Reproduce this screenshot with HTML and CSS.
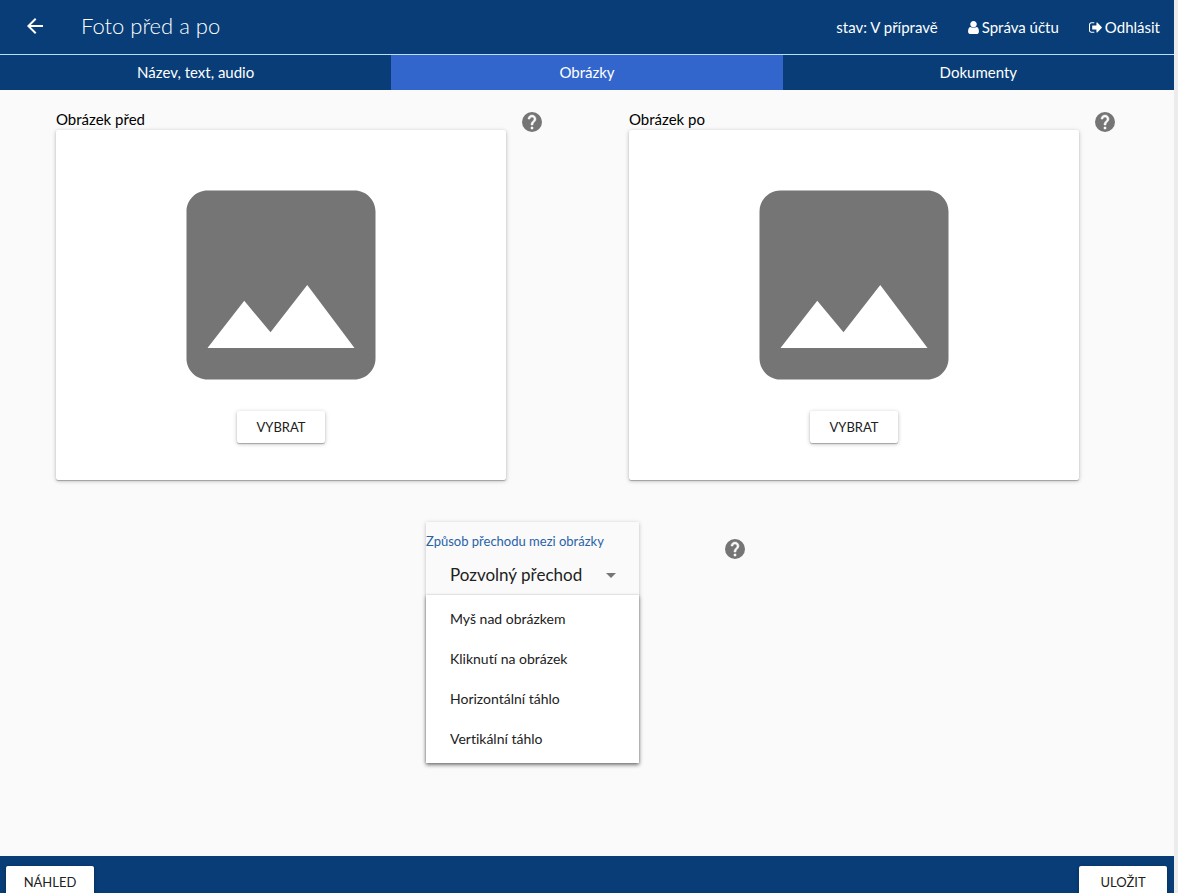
FILE: index.html
```html
<!DOCTYPE html>
<html lang="cs">
<head>
<meta charset="utf-8">
<meta name="viewport" content="width=device-width, initial-scale=1">
<title>Foto před a po</title>
<link rel="stylesheet" href="styles.css">
</head>
<body>
<svg class="sprite" aria-hidden="true">
  <symbol id="help" viewBox="0 0 24 24">
    <circle cx="12" cy="12" r="10"/>
    <path fill="#fafafa" stroke="#fafafa" stroke-width=".5" d="M13 19h-2v-2h2v2zm2.070-7.750l-.9.920C13.450 12.900 13 13.500 13 15h-2v-.5c0-1.100.450-2.100 1.170-2.830l1.240-1.260c.370-.360.590-.860.590-1.410 0-1.100-.9-2-2-2s-2 .9-2 2H8c0-2.210 1.790-4 4-4s4 1.790 4 4c0 .880-.360 1.680-.930 2.250z"/>
  </symbol>
  <symbol id="image" viewBox="0 0 24 24"><path d="M21 19V5c0-1.100-.9-2-2-2H5c-1.100 0-2 .9-2 2v14c0 1.100.9 2 2 2h14c1.100 0 2-.9 2-2zM8.500 13.500l2.500 3.010L14.500 12l4.500 6H5l3.500-4.500z"/></symbol>
</svg>
<div class="app">
  <header class="toolbar">
    <button class="back" type="button" aria-label="Zpět">
      <svg viewBox="0 0 24 24"><path d="M20 11H7.830l5.590-5.590L12 4l-8 8 8 8 1.410-1.410L7.830 13H20v-2z"/></svg>
    </button>
    <h1 class="title">Foto před a po</h1>
    <div class="account">
      <span>stav: V přípravě</span>
      <a href="#account">
        <svg class="icon-user" viewBox="0 0 1280 1536"><path d="M1280 1271q0 109-62.500 187t-150.500 78H213q-88 0-150.500-78T0 1271q0-85 8.500-160.500t31.500-152 58.500-131 94-89T327 704q131 128 313 128t313-128q76 0 134.500 34.500t94 89 58.500 131 31.500 152 8.500 160.500zM1024 384q0 159-112.500 271.500T640 768 368.500 655.500 256 384 368.500 112.500 640 0t271.500 112.500T1024 384z"/></svg>
        Správa účtu
      </a>
      <a href="#logout">
        <svg class="icon-out" viewBox="0 0 1568 1280"><path d="M640 1184q0 4 1 20t.5 26.500-3 23.500-10 19.500-20.500 6.500H288q-119 0-203.500-84.500T0 992V288q0-119 84.500-203.500T288 0h320q13 0 22.500 9.500T640 32q0 4 1 20t.5 26.500-3 23.500-10 19.500T608 128H288q-66 0-113 47t-47 113v704q0 66 47 113t113 47h312l11.500 1 11.500 3 8 5.500 7 9 2 13.500zM1568 640q0 26-19 45l-544 544q-19 19-45 19t-45-19-19-45V896H448q-26 0-45-19t-19-45V448q0-26 19-45t45-19h448V96q0-26 19-45t45-19 45 19l544 544q19 19 19 45z"/></svg>
        Odhlásit
      </a>
    </div>
  </header>
  <nav class="tabs">
    <a href="#text">Název, text, audio</a>
    <a href="#images" class="active" aria-current="page">Obrázky</a>
    <a href="#documents">Dokumenty</a>
  </nav>
  <main class="content">
    <div class="pictures">
      <section class="picture">
        <div class="field">
          <h2 class="label">Obrázek před</h2>
          <div class="card">
            <svg class="placeholder" aria-hidden="true"><use href="#image"/></svg>
            <button class="btn" type="button">VYBRAT</button>
          </div>
        </div>
        <button class="help" type="button" aria-label="Nápověda"><svg><use href="#help"/></svg></button>
      </section>
      <section class="picture">
        <div class="field">
          <h2 class="label">Obrázek po</h2>
          <div class="card">
            <svg class="placeholder" aria-hidden="true"><use href="#image"/></svg>
            <button class="btn" type="button">VYBRAT</button>
          </div>
        </div>
        <button class="help" type="button" aria-label="Nápověda"><svg><use href="#help"/></svg></button>
      </section>
    </div>
    <section class="transition">
      <div class="dropdown">
        <div class="dropdown-head">
          <label for="transition">Způsob přechodu mezi obrázky</label>
          <div class="select-row">
            <select id="transition"><option>Pozvolný přechod</option></select>
            <svg viewBox="0 0 10 5" aria-hidden="true"><path d="M0 0h10L5 5z"/></svg>
          </div>
        </div>
        <ul class="menu">
          <li><button type="button">Myš nad obrázkem</button></li>
          <li><button type="button">Kliknutí na obrázek</button></li>
          <li><button type="button">Horizontální táhlo</button></li>
          <li><button type="button">Vertikální táhlo</button></li>
        </ul>
      </div>
      <button class="help" type="button" aria-label="Nápověda"><svg><use href="#help"/></svg></button>
    </section>
  </main>
  <footer class="actions">
    <button class="btn" type="button">NÁHLED</button>
    <button class="btn" type="button">ULOŽIT</button>
  </footer>
</div>
</body>
</html>
```
FILE: styles.css
```css
* { box-sizing: border-box; }

body {
  margin: 0;
  background: #ececec;
  color: #212121;
  font: 15px/20px Lato, "Open Sans", sans-serif;
  font-variant-ligatures: none;
}

button, select { font: inherit; color: inherit; border: 0; padding: 0; background: none; cursor: pointer; }
a { color: inherit; text-decoration: none; }
h1, h2, ul { margin: 0; padding: 0; font-weight: 400; list-style: none; }
svg { display: block; fill: currentColor; }
.sprite { display: none; }

.app {
  display: flex;
  flex-direction: column;
  height: 100vh;
  margin-right: 4px;
  background: #fafafa;
  overflow: hidden;
}

.toolbar {
  display: flex;
  align-items: center;
  flex: none;
  height: 55px;
  padding: 0 14px 2px 23px;
  border-bottom: 1px solid #bbdefb;
  background: #083d77;
  color: #fff;
}
.back svg { width: 24px; height: 24px; }
.title { margin-left: 34px; font-size: 22px; line-height: 28px; font-weight: 300; }
.account { display: flex; gap: 30px; margin-left: auto; padding-top: 2px; }
.account a { display: flex; align-items: center; gap: 3px; }
.icon-user { width: 11px; height: 13px; }
.icon-out { width: 13px; height: 11px; }

.tabs { display: grid; grid-template-columns: repeat(3, 1fr); flex: none; background: #083d77; color: #fff; }
.tabs a { padding: 7px 0 8px; text-align: center; }
.tabs .active { background: #3366cc; }

.content { flex: 1; min-height: 0; padding: 19px 14px; }
.pictures { display: grid; grid-template-columns: 1fr 1fr; }
.picture { display: flex; gap: 14px; padding: 0 43px 0 42px; }
.field { flex: 1; }
.label { padding-bottom: 1px; font-size: 15px; line-height: 20px; color: #000; }
.card {
  display: flex;
  flex-direction: column;
  align-items: center;
  padding: 29px 0 37px;
  border-radius: 2px;
  background: #fff;
  box-shadow: 0 1px 4px rgba(0, 0, 0, .25), 0 1px 1px rgba(0, 0, 0, .25);
}
.placeholder { width: 252px; height: 252px; color: #757575; }
.help { align-self: flex-start; padding-top: 1px; color: #757575; }
.help svg { width: 24px; height: 24px; }

.btn {
  min-width: 88px;
  height: 32px;
  border-radius: 2px;
  background: #fff;
  font-size: 13px;
  box-shadow: 0 1px 4px rgba(0, 0, 0, .25), 0 1px 1px rgba(0, 0, 0, .25);
}

.transition { display: flex; justify-content: center; gap: 84px; margin: 42px 1px 0 0; }
.transition .help { margin-top: 14px; }
.dropdown { width: 213px; box-shadow: 0 1px 4px rgba(0, 0, 0, .25); }
.dropdown-head { padding: 9px 0 8px; }
.dropdown label { display: block; font-size: 13px; color: #2962a8; }
.select-row { display: flex; align-items: center; justify-content: space-between; margin-top: 12px; padding: 0 23px 0 24px; }
.select-row select { appearance: none; height: 24px; font-size: 17px; outline: 0; }
.select-row svg { width: 10px; height: 5px; color: #757575; }
.menu {
  padding: 4px 0;
  background: #fff;
  box-shadow: 0 2px 4px rgba(0, 0, 0, .4), 0 0 2px rgba(0, 0, 0, .15);
}
.menu button { width: 100%; padding: 10px 24px; font-size: 14px; text-align: left; }

.actions {
  display: flex;
  justify-content: space-between;
  align-items: flex-start;
  flex: none;
  height: 37px;
  padding: 10px 7px 0 6px;
  background: #083d77;
  overflow: hidden;
}
```
